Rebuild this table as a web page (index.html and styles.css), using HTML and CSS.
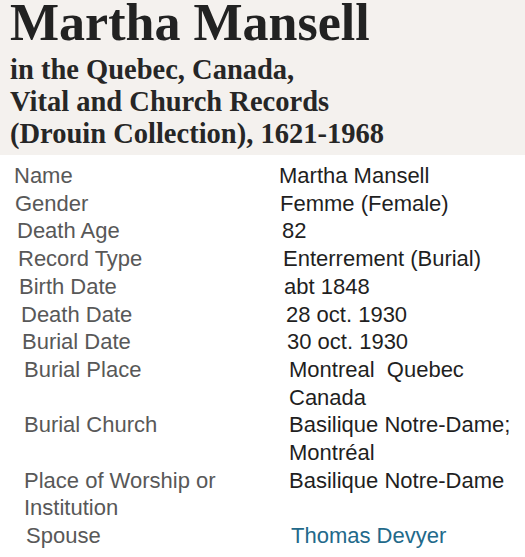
FILE: index.html
```html
<!DOCTYPE html>
<html lang="en">
<head>
<meta charset="utf-8">
<title>Martha Mansell</title>
<link rel="stylesheet" href="styles.css">
</head>
<body>
<header class="record-header">
  <h1 class="record-title">Martha Mansell</h1>
  <p class="record-collection">in the Quebec, Canada,<br>Vital and Church Records<br>(Drouin Collection), 1621-1968</p>
</header>
<main class="record-table">
  <div class="row s0"><div class="label">Name</div><div class="value">Martha Mansell</div></div>
  <div class="row s1"><div class="label">Gender</div><div class="value">Femme (Female)</div></div>
  <div class="row s3"><div class="label">Death Age</div><div class="value">82</div></div>
  <div class="row s4"><div class="label">Record Type</div><div class="value">Enterrement (Burial)</div></div>
  <div class="row s5"><div class="label">Birth Date</div><div class="value">abt 1848</div></div>
  <div class="row s7"><div class="label">Death Date</div><div class="value">28 oct. 1930</div></div>
  <div class="row s8"><div class="label">Burial Date</div><div class="value">30 oct. 1930</div></div>
  <div class="row s10"><div class="label">Burial Place</div><div class="value">Montreal&nbsp; Quebec<br>Canada</div></div>
  <div class="row s10"><div class="label">Burial Church</div><div class="value">Basilique Notre-Dame;<br>Montréal</div></div>
  <div class="row s10"><div class="label">Place of Worship or<br>Institution</div><div class="value">Basilique Notre-Dame</div></div>
  <div class="row s12"><div class="label">Spouse</div><div class="value"><a class="link" href="#">Thomas Devyer</a></div></div>
</main>
</body>
</html>
```

FILE: styles.css
```css
html, body {
  margin: 0;
  padding: 0;
  background: #ffffff;
}

body {
  width: 525px;
  height: 557px;
  overflow: hidden;
}

.record-header {
  background: #f4f1ee;
  padding: 1px 0 5px 10px;
  height: 149px;
}

.record-title {
  margin: 0;
  font-family: "Liberation Serif", "Times New Roman", serif;
  font-weight: 700;
  font-size: 52px;
  line-height: 44px;
  color: #222222;
}

.record-collection {
  margin: 9px 0 0;
  font-family: "Liberation Serif", "Times New Roman", serif;
  font-weight: 700;
  font-size: 28.5px;
  line-height: 32px;
  color: #262626;
}

.record-table {
  padding: 7px 0 0 14px;
  font-family: "Liberation Sans", Arial, sans-serif;
  font-size: 22px;
  line-height: 27.7px;
}

.row {
  display: grid;
  grid-template-columns: 265px 230px;
}

.label {
  color: #585858;
}

.value {
  color: #1f1f1f;
}

.link {
  color: #22698a;
  text-decoration: none;
}

.s0 { margin-left: 0; }
.s1 { margin-left: 1px; }
.s3 { margin-left: 3px; }
.s4 { margin-left: 4px; }
.s5 { margin-left: 5px; }
.s7 { margin-left: 7px; }
.s8 { margin-left: 8px; }
.s10 { margin-left: 10px; }
.s12 { margin-left: 12px; }
```
